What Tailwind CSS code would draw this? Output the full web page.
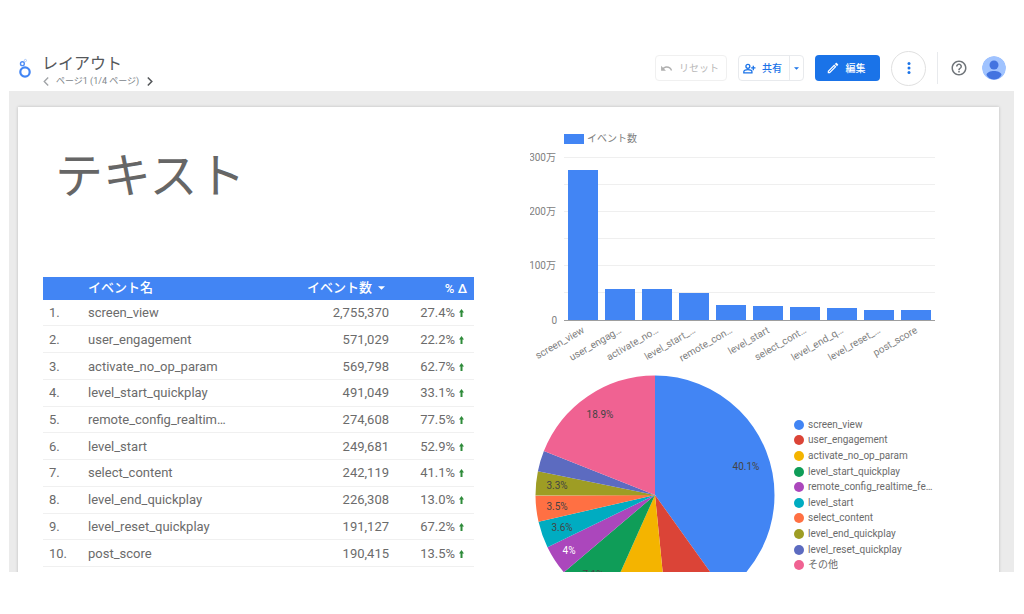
<!DOCTYPE html>
<html lang="ja">
<head>
<meta charset="utf-8">
<meta name="viewport" content="width=device-width, initial-scale=1">
<title>レイアウト</title>
<script src="https://cdn.jsdelivr.net/npm/@tailwindcss/browser@4"></script>
</head>
<body class="flex h-screen flex-col bg-white pt-[45px] pr-[10px] pb-[42px] pl-[9px] font-['Roboto','Noto_Sans_CJK_JP',sans-serif] text-[#6b6b6b]">

<header class="flex h-[46px] shrink-0 items-center pr-2 pl-[9px]">
  <svg class="mr-1 size-5 shrink-0" viewBox="0 0 20 20" fill="none" aria-label="Looker Studio" role="img">
    <circle cx="7" cy="14" r="4.700" stroke="#4285f4" stroke-width="2.200"/>
    <circle cx="4.400" cy="5.700" r="1.900" stroke="#4f8df5" stroke-width="1.400"/>
    <circle cx="7.400" cy="2.500" r="1.100" stroke="#a9c8fb" stroke-width="1"/>
  </svg>
  <div class="min-w-0 pt-[6px]">
    <h1 class="text-base leading-5 text-[#55585b]">レイアウト</h1>
    <nav class="flex items-center gap-[5px] text-[9px] leading-[14px] text-[#80868b]" aria-label="ページ">
      <button type="button" aria-label="前のページ"><svg class="size-[9px]" viewBox="0 0 8 8" fill="none" stroke="#a0a3a6" stroke-width="1.200"><path d="M5.500 0.500 2 4l3.500 3.500"/></svg></button>
      <span>ページ1 (1/4 ページ)</span>
      <button type="button" class="ml-px" aria-label="次のページ"><svg class="size-[9px]" viewBox="0 0 8 8" fill="none" stroke="#55585b" stroke-width="1.400"><path d="m2.500 0.500 3.500 3.500-3.500 3.500"/></svg></button>
    </nav>
  </div>
  <div class="ml-auto flex shrink-0 items-center gap-[11px]">
    <button type="button" class="flex h-[26px] w-[72px] items-center justify-center gap-[6px] rounded-sm border border-[#f0f0f0] pr-[3px] text-[10px] text-[#b8b8b8]">
      <svg class="size-[13px] shrink-0" viewBox="0 0 24 24" fill="#b0b0b0"><path d="M12.500 8c-2.650 0-5.050.99-6.900 2.600L2 7v9h9l-3.620-3.620c1.390-1.160 3.160-1.880 5.120-1.880 3.540 0 6.550 2.310 7.600 5.500l2.370-.78C21.080 11.030 17.150 8 12.500 8z"/></svg>
      リセット
    </button>
    <div class="flex h-[26px] rounded-sm border border-[#e8eaed] text-[#1a73e8]">
      <button type="button" class="flex w-[50px] items-center justify-center gap-[6px] pr-[3px] text-[10px] font-medium">
        <svg class="size-[13px] shrink-0" viewBox="0 0 24 24" fill="none" stroke="#1a73e8" stroke-width="2.400"><circle cx="9" cy="8" r="3.600"/><path d="M1.500 20v-2c0-2.600 4-4 7.500-4s7.500 1.400 7.500 4v2zM19 7v8M15 11h8"/></svg>
        共有
      </button>
      <button type="button" class="flex w-[14px] items-center justify-center border-l border-[#e8eaed]" aria-label="共有オプション">
        <svg class="h-[3px] w-[5px]" viewBox="0 0 6 3" fill="#1a73e8"><path d="M0 0h6L3 3z"/></svg>
      </button>
    </div>
    <button type="button" class="flex h-[26px] w-[65px] items-center justify-center gap-[6px] rounded-sm bg-[#1a73e8] pr-1 text-[10px] font-medium text-white">
      <svg class="size-[14px]" viewBox="0 0 24 24" fill="white"><path d="M14.060 9.020l.92.92L5.920 19H5v-.92l9.060-9.060M17.660 3c-.25 0-.51.1-.7.29l-1.830 1.830 3.750 3.750 1.830-1.830c.39-.39.39-1.020 0-1.410l-2.340-2.340c-.2-.2-.45-.29-.71-.29zm-3.600 3.190L3 17.250V21h3.750L17.810 9.940l-3.750-3.750z"/></svg>
      編集
    </button>
    <button type="button" class="flex size-[35px] items-center justify-center rounded-full border border-[#e0e0e0]" aria-label="その他のオプション">
      <svg class="h-3 w-1" viewBox="0 0 4 12" fill="#1a73e8"><circle cx="2" cy="1.600" r="1.500"/><circle cx="2" cy="6" r="1.500"/><circle cx="2" cy="10.400" r="1.500"/></svg>
    </button>
    <div class="h-8 w-px bg-[#e8eaed]"></div>
    <button type="button" class="ml-px" aria-label="ヘルプ">
      <svg class="size-[18px]" viewBox="0 0 24 24" fill="#70757a"><path d="M11 18h2v-2h-2v2zm1-16C6.480 2 2 6.480 2 12s4.480 10 10 10 10-4.480 10-10S17.520 2 12 2zm0 18c-4.410 0-8-3.590-8-8s3.590-8 8-8 8 3.590 8 8-3.590 8-8 8zm0-14c-2.210 0-4 1.790-4 4h2c0-1.100.9-2 2-2s2 .9 2 2c0 2-3 1.750-3 5h2c0-2.250 3-2.500 3-5 0-2.210-1.790-4-4-4z"/></svg>
    </button>
    <button type="button" class="ml-[3px] overflow-hidden rounded-full" aria-label="アカウント">
      <svg class="size-6" viewBox="0 0 24 24"><circle cx="12" cy="12" r="12" fill="#a0c3ff"/><circle cx="12" cy="9" r="4.500" fill="#4374e0"/><path d="M4.500 19c0-2.500 4-4 7.500-4s7.500 1.500 7.500 4c-1.200 2.500-4 4.500-7.500 4.500S5.700 21.500 4.500 19z" fill="#4374e0"/></svg>
    </button>
  </div>
</header>

<main class="min-h-0 flex-1 overflow-hidden bg-[#ebebeb] pt-4 pr-[15px] pl-[9px]">
  <div class="grid min-h-full grid-cols-[431fr_469fr] gap-14 bg-white pl-[25px] shadow-[0_0_3px_rgba(0,0,0,0.2)]">

    <section>
      <h2 class="pt-[34px] pb-16 pl-3 text-5xl leading-[72px] text-[#666666]">テキスト</h2>
      <table class="h-[290px] w-full table-fixed border-collapse text-[13px] leading-4">
        <colgroup><col class="w-[45px]"><col><col class="w-[120px]"><col class="w-[85px]"></colgroup>
        <thead>
          <tr class="h-[23px] bg-[#4285f4] text-white">
            <th class="p-0" aria-label="順位"></th>
            <th class="p-0 pb-px text-left font-medium">イベント名</th>
            <th class="p-0 pb-px font-medium" aria-sort="descending"><span class="flex items-center justify-end gap-[6px] pr-1">イベント数<svg class="h-1 w-[7px]" viewBox="0 0 8 4" fill="white"><path d="M0 0h8L4 4z"/></svg></span></th>
            <th class="p-0 pr-[7px] text-right font-medium">% Δ</th>
          </tr>
        </thead>
        <tbody id="rows"></tbody>
      </table>
    </section>

    <section>
      <svg class="block w-full" viewBox="0 0 469 258" role="img" aria-label="イベント数の棒グラフ" font-size="10" fill="#808080">
        <rect x="34" y="27" width="20" height="10" fill="#4285f4"/>
        <text x="57" y="35">イベント数</text>
        <g stroke="#efefef">
          <path d="M34 50.500h371M34 77.500h371M34 104.500h371M34 131.500h371M34 158.500h371M34 185.500h371"/>
        </g>
        <g text-anchor="end">
          <text x="26" y="54">300万</text>
          <text x="26" y="108">200万</text>
          <text x="26" y="162">100万</text>
          <text x="27" y="217">0</text>
        </g>
        <g id="bars" fill="#4285f4"></g>
        <path d="M34 213.500h371" stroke="#9e9e9e"/>
        <g id="ticks" text-anchor="end"></g>
      </svg>
      <div class="flex items-start">
        <svg class="w-[250px] shrink-0" viewBox="0 0 250 250" role="img" aria-label="イベント数の円グラフ" font-size="10" fill="#444444">
          <g id="slices" fill="none" transform="rotate(-90 125 130)"></g>
          <g text-anchor="middle">
            <text x="216" y="105">40.1%</text>
            <text x="70" y="53">18.9%</text>
            <text x="27" y="124">3.3%</text>
            <text x="27" y="145">3.5%</text>
            <text x="32" y="166">3.6%</text>
            <text x="39" y="189" fill="white">4%</text>
            <text x="63" y="213">7.1%</text>
          </g>
        </svg>
        <ul id="legend" class="mt-[52px] ml-[14px] grid h-[156px] auto-rows-fr text-[10px] leading-3"></ul>
      </div>
    </section>
  </div>
</main>

<script>
const events = [
  ['screen_view', 2755370, '27.4%', '#4285f4', 'screen_view', 40.1],
  ['user_engagement', 571029, '22.2%', '#db4437', 'user_engag…', 8.3],
  ['activate_no_op_param', 569798, '62.7%', '#f4b400', 'activate_no…', 8.3],
  ['level_start_quickplay', 491049, '33.1%', '#0f9d58', 'level_start_…', 7.1],
  ['remote_config_realtim…', 274608, '77.5%', '#ab47bc', 'remote_con…', 4],
  ['level_start', 249681, '52.9%', '#00acc1', 'level_start', 3.6],
  ['select_content', 242119, '41.1%', '#ff7043', 'select_cont…', 3.5],
  ['level_end_quickplay', 226308, '13.0%', '#9e9d24', 'level_end_q…', 3.3],
  ['level_reset_quickplay', 191127, '67.2%', '#5c6bc0', 'level_reset_…', 2.8],
  ['post_score', 190415, '13.5%', '#f06292', 'post_score', 19],
];
const legendNames = {4: 'remote_config_realtime_fe…', 9: 'その他'};
let rows = '', bars = '', ticks = '', slices = '', legend = '', sum = 0;
events.forEach(([name, count, delta, color, tick, share], i) => {
  rows += `<tr class="border-b border-[#f0f0f0]"><td class="p-0 pt-px pl-[6px]">${i + 1}.</td><td class="p-0 pt-px whitespace-nowrap">${name}</td><td class="p-0 pt-px text-right">${count.toLocaleString('en-US')}</td><td class="p-0 pt-px pr-[10px]"><span class="flex items-center justify-end gap-1">${delta}<svg class="h-2 w-[5px]" viewBox="0 0 5 8" fill="#2e8b3a"><path d="M2.500 0 5 3.500H3.500V8h-2V3.500H0z"/></svg></span></td></tr>`;
  const h = Math.round(count * 163 / 3e6);
  bars += `<rect x="${38 + 37 * i}" y="${213 - h}" width="30" height="${h}"/>`;
  ticks += `<text transform="translate(${55 + 37 * i} 225) rotate(-30)">${tick}</text>`;
  slices += `<circle cx="125" cy="130" r="59.75" stroke-width="119.5" pathLength="100" stroke="${color}" stroke-dasharray="${share} 100" stroke-dashoffset="${-sum}"/>`;
  sum += share;
  legend += `<li class="flex items-center gap-1 whitespace-nowrap"><span class="size-[10px] rounded-full" style="background:${color}"></span>${legendNames[i] || name}</li>`;
});
document.getElementById('rows').innerHTML = rows;
document.getElementById('bars').innerHTML = bars;
document.getElementById('ticks').innerHTML = ticks;
document.getElementById('slices').innerHTML = slices;
document.getElementById('legend').innerHTML = legend;
</script>
</body>
</html>
